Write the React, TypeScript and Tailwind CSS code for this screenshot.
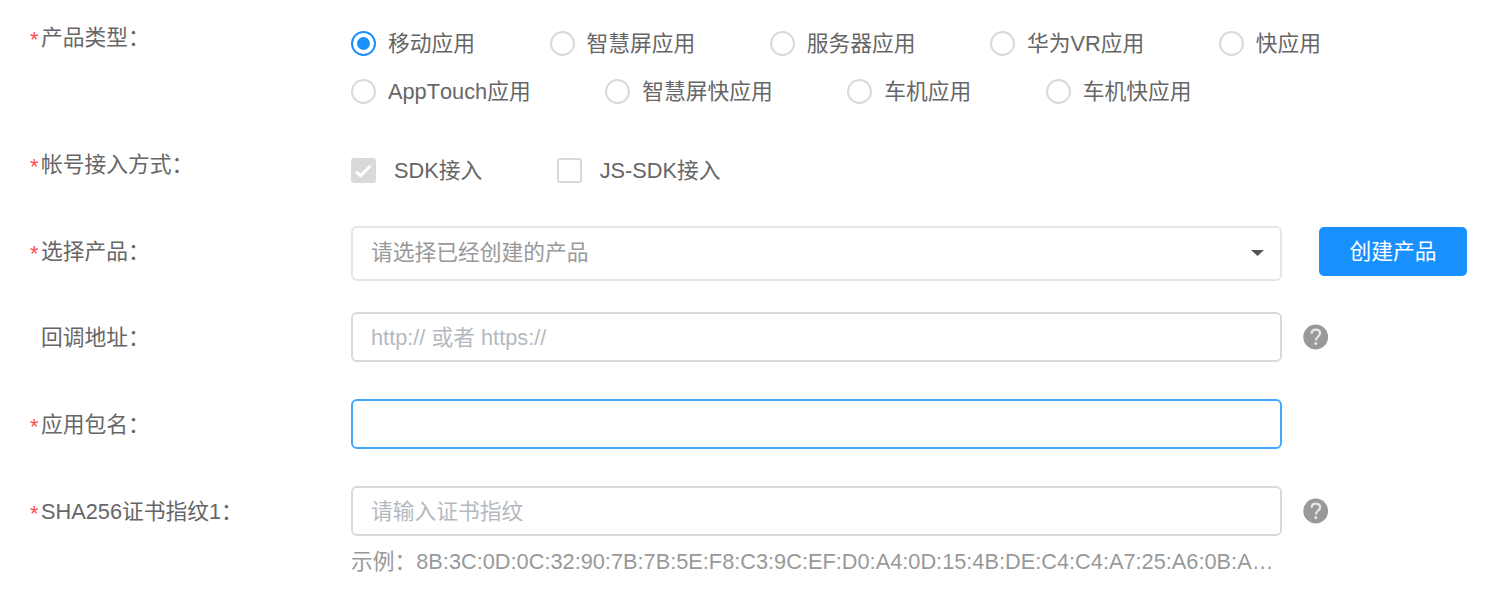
import type { ReactNode } from 'react'

interface FieldProps {
  label: string
  required?: boolean
  className: string
  labelClassName?: string
  children: ReactNode
}

function Field({ label, required = true, className, labelClassName = '', children }: FieldProps) {
  return (
    <div className={`flex items-start ${className}`}>
      <div className={`flex w-[322px] shrink-0 leading-8 ${labelClassName}`}>
        <span className="w-[12px] shrink-0 pt-[2px] pl-px text-[#ff4d4f]">{required && '*'}</span>
        <span className="whitespace-nowrap">{label}</span>
      </div>
      {children}
    </div>
  )
}

function Radio({ label, checked = false }: { label: string; checked?: boolean }) {
  return (
    <label className="flex h-12 items-center gap-[12px] whitespace-nowrap">
      <span
        className={`flex size-[25px] shrink-0 items-center justify-center rounded-full border-2 ${
          checked ? 'border-[#1890ff]' : 'border-[#d9d9d9]'
        }`}
      >
        {checked && <span className="size-[13px] rounded-full bg-[#1890ff]" />}
      </span>
      <span className="pt-[2px]">{label}</span>
    </label>
  )
}

function Checkbox({ label, checked = false }: { label: string; checked?: boolean }) {
  return (
    <label className="flex items-center gap-[18px] whitespace-nowrap">
      <span
        className={`flex size-[25px] shrink-0 items-center justify-center rounded-[3px] border-2 border-[#d9d9d9] ${
          checked ? 'bg-[#d9d9d9]' : 'bg-white'
        }`}
      >
        {checked && (
          <svg width="21" height="21" viewBox="0 0 21 21" fill="none" stroke="#fff" strokeWidth="3">
            <polyline points="3,11.5 7.5,15.8 17.5,5.8" />
          </svg>
        )}
      </span>
      <span className="pt-px">{label}</span>
    </label>
  )
}

function HelpIcon() {
  return (
    <svg className="mt-[12px] ml-[21px] shrink-0" width="26" height="26" viewBox="0 0 26 26" fill="none">
      <circle cx="12.7" cy="13" r="12.4" fill="#999" />
      <path
        d="M8.6 9.8C8.6 7 10.2 5.7 12.8 5.7c2.6 0 4.3 1.4 4.3 3.6 0 1.8-1 2.6-2.3 3.7-1.3 1-1.9 1.7-1.9 3.5"
        stroke="#e6e6e6"
        strokeWidth="2.2"
      />
      <circle cx="12.8" cy="19.5" r="1.5" fill="#e6e6e6" />
    </svg>
  )
}

const productTypes = [
  ['移动应用', '智慧屏应用', '服务器应用', '华为VR应用', '快应用'],
  ['AppTouch应用', '智慧屏快应用', '车机应用', '车机快应用'],
]

const inputClass =
  'h-[50px] w-[931px] shrink-0 rounded-[6px] border-2 bg-white pt-px pr-[19px] pl-[18px] outline-none placeholder:text-[#b4b9bf] placeholder:opacity-100'

export default function App() {
  return (
    <div className="h-[604px] w-[1488px] overflow-hidden bg-white pl-[29px] font-['Liberation_Sans','Noto_Sans_CJK_SC',sans-serif] text-[21.75px] text-[#666] [font-kerning:none]">
      <Field label="产品类型：" className="h-[139px] pt-[19px]" labelClassName="mt-[3px]">
        <div>
          {productTypes.map((row, i) => (
            <div key={i} className="flex gap-[74.5px]">
              {row.map((name) => (
                <Radio key={name} label={name} checked={name === '移动应用'} />
              ))}
            </div>
          ))}
        </div>
      </Field>

      <Field label="帐号接入方式：" className="h-[87px] pt-[10px]">
        <div className="flex gap-[74.5px] pt-[5px]">
          <Checkbox label="SDK接入" checked />
          <Checkbox label="JS-SDK接入" />
        </div>
      </Field>

      <Field label="选择产品：" className="h-[86px]" labelClassName="mt-[10px]">
        <div className="flex h-[55px] w-[931px] shrink-0 items-center justify-between rounded-[6px] border-2 border-[#e1e6eb] pr-[19px] pb-px pl-[18px] text-[#999]">
          请选择已经创建的产品
          <svg className="mr-[-3px]" width="13" height="6" viewBox="0 0 13 6" fill="#555">
            <path d="M0 0h13L6.5 6z" />
          </svg>
        </div>
        <button className="mt-px ml-[37px] h-[49px] w-[148px] rounded-[5px] bg-[#1890ff] pt-[2px] text-white">
          创建产品
        </button>
      </Field>

      <Field label="回调地址：" required={false} className="h-[87px]" labelClassName="mt-[10px]">
        <input className={`${inputClass} border-[#d9d9d9]`} placeholder="http:// 或者 https://" />
        <HelpIcon />
      </Field>

      <Field label="应用包名：" className="h-[87px]" labelClassName="mt-[10px]">
        <input className={`${inputClass} border-[#40a9ff]`} />
      </Field>

      <Field label="SHA256证书指纹1：" className="h-[118px]" labelClassName="mt-[10px]">
        <div className="w-[931px] shrink-0">
          <input className={`${inputClass} border-[#d9d9d9]`} placeholder="请输入证书指纹" />
          <p className="mt-[10px] truncate leading-8 text-[#999]">
            示例：8B:3C:0D:0C:32:90:7B:7B:5E:F8:C3:9C:EF:D0:A4:0D:15:4B:DE:C4:C4:A7:25:A6:0B:A…
          </p>
        </div>
        <HelpIcon />
      </Field>
    </div>
  )
}
